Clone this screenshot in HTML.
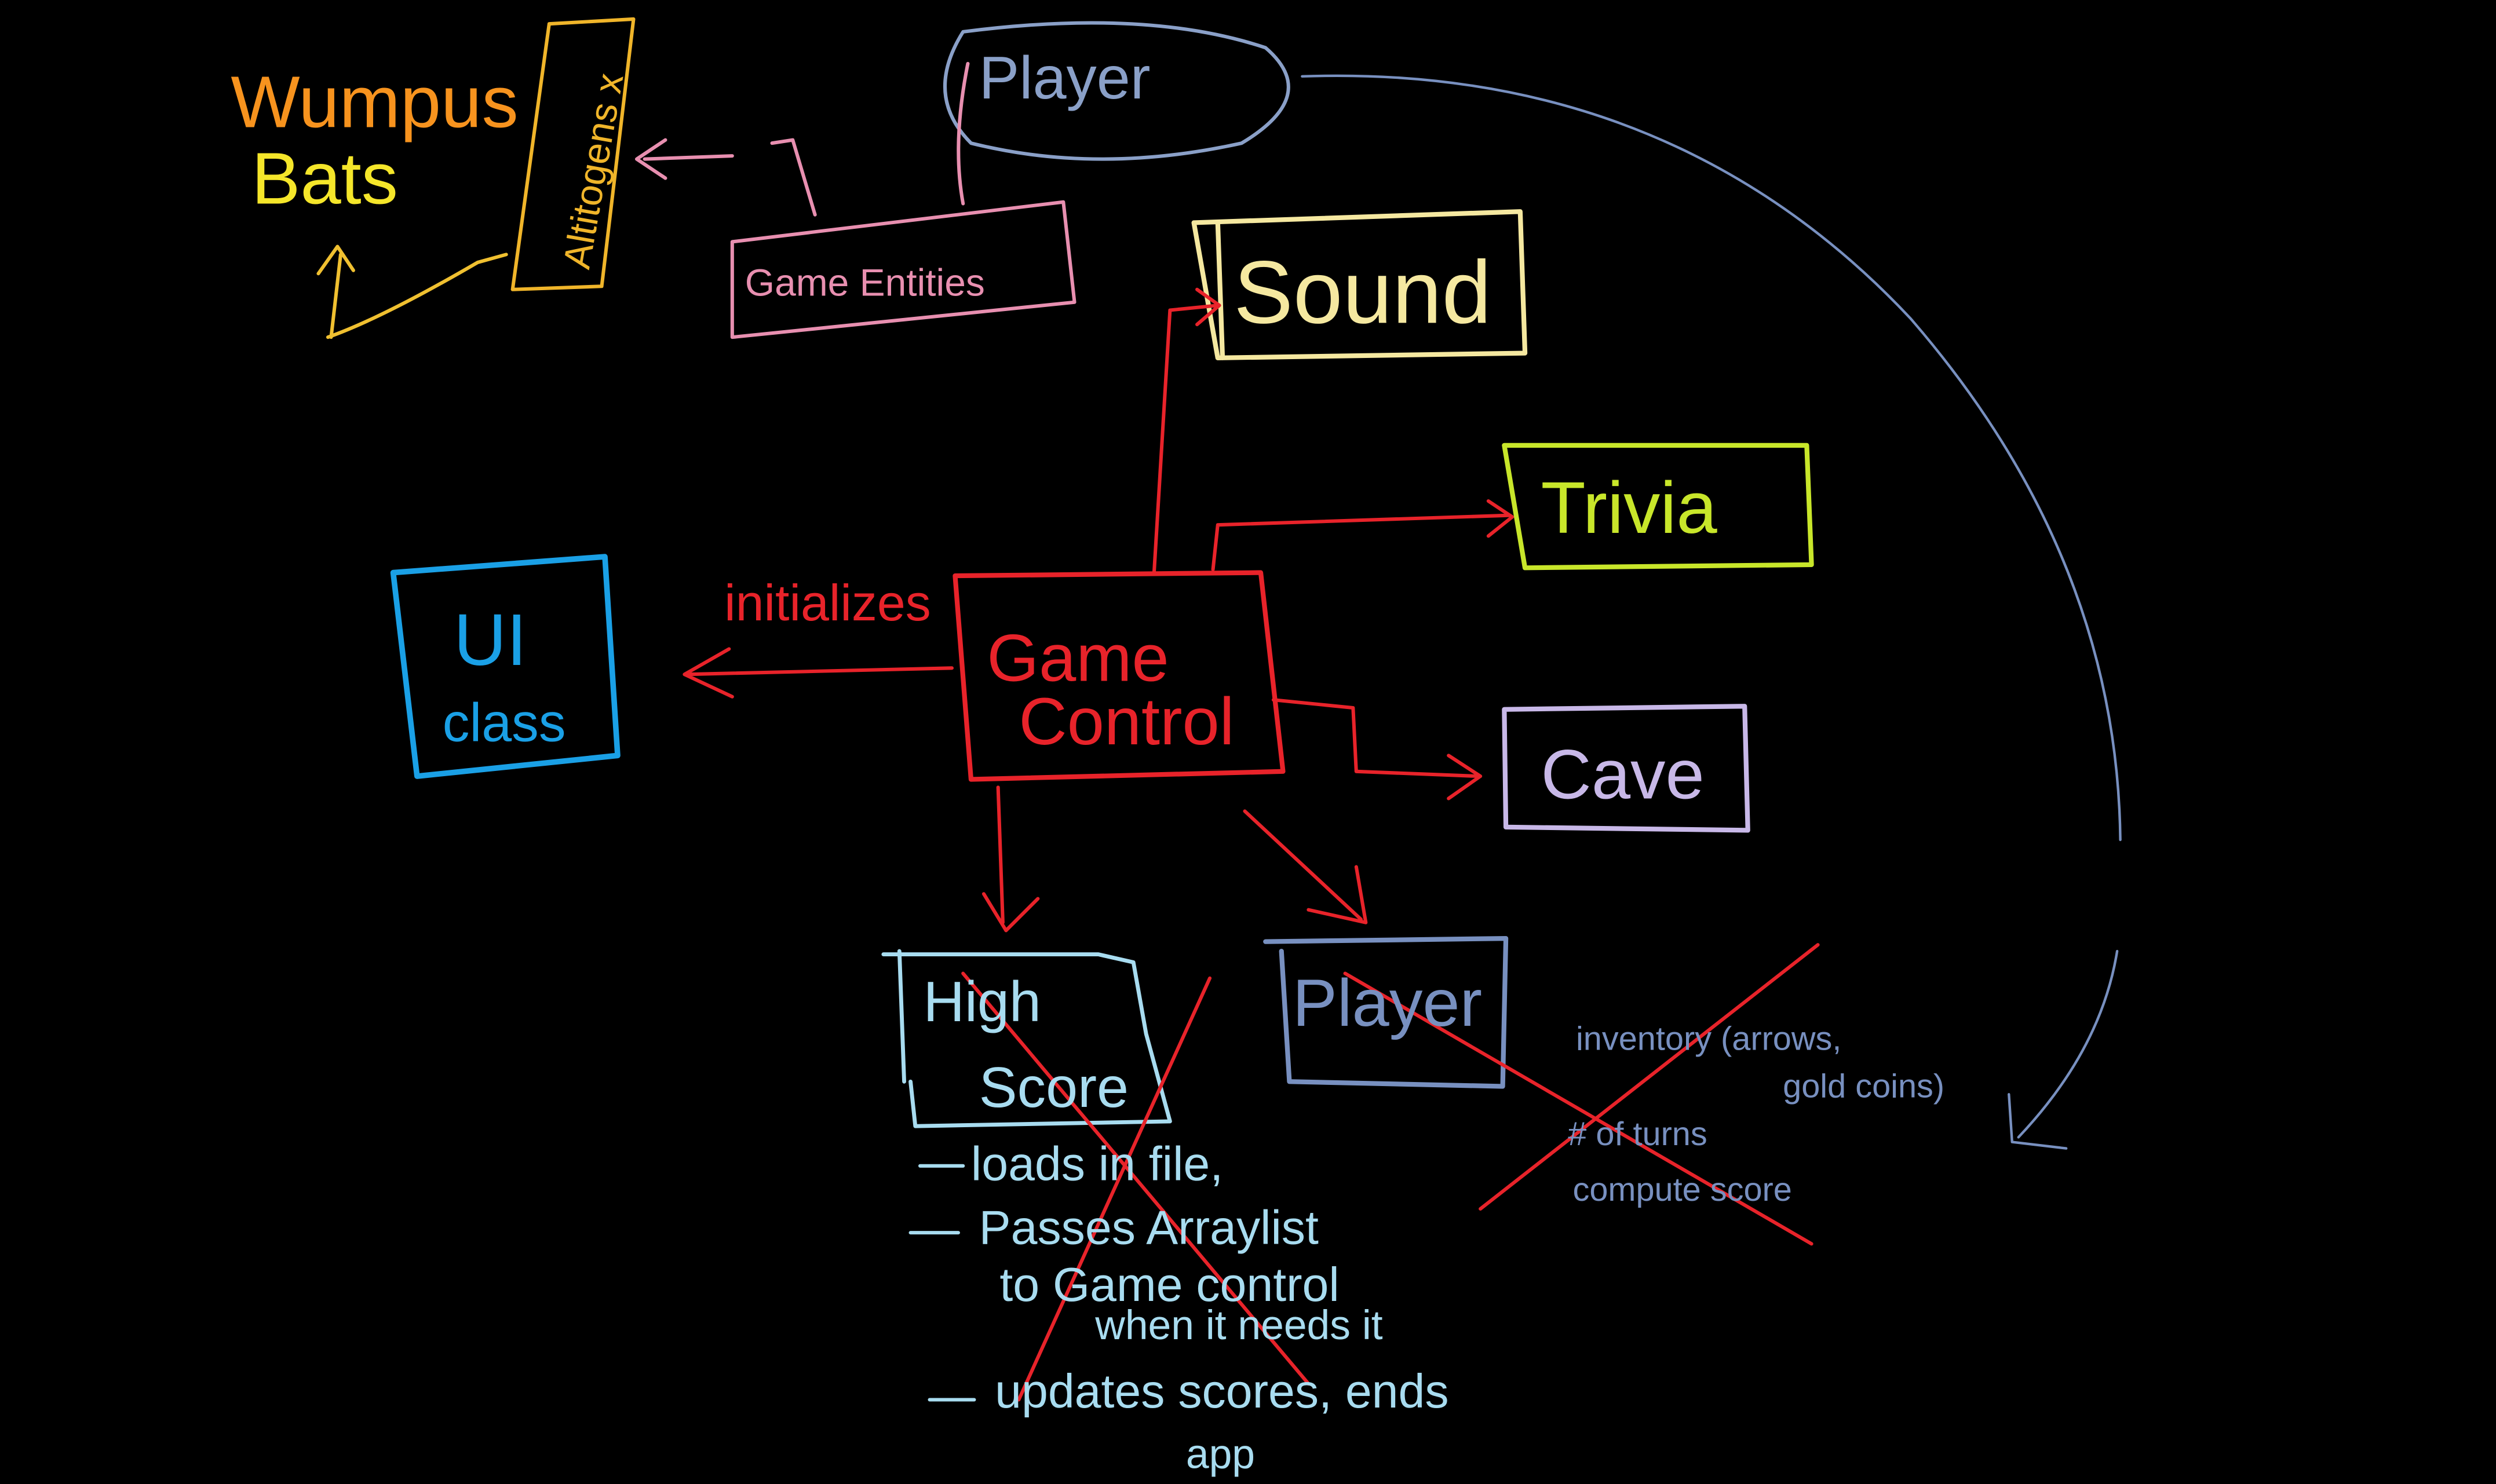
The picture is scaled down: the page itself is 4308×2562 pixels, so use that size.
<!DOCTYPE html>
<html><head><meta charset="utf-8"><style>
html,body{margin:0;padding:0;background:#000;}
svg{display:block}
text{font-family:"Liberation Sans",sans-serif;}
</style></head><body>
<svg width="4308" height="2562" viewBox="0 0 1568 933" preserveAspectRatio="none" xmlns="http://www.w3.org/2000/svg">
<rect width="1568" height="933" fill="#000"/>
<g fill="none" stroke-width="2.2" stroke-linecap="round" stroke-linejoin="round">
<path d="M208 212 L214 160 M200 172 L212 155 L222 170" stroke="#f0c030"/>
<path d="M206 212 Q240 200 300 165 L318 160" stroke="#f0c030"/>
<path d="M345 15 L398 12 L378 180 L322 182 Z" stroke="#f0b52a"/>
<path d="M460 98 L405 100 M418 88 L400 100 L418 112" stroke="#e88fb0"/>
<path d="M485 90 L498 88 L512 135" stroke="#e88fb0"/>
<path d="M460 152 L668 127 L675 190 L460 212 Z" stroke="#e88fb0"/>
<path d="M605 20 Q720 5 795 30 Q830 60 780 90 Q690 110 610 90 Q580 60 605 20" stroke="#8aa0c8"/>
<path d="M608 40 Q598 90 605 128" stroke="#e88fb0"/>
<path d="M818 48 Q1050 40 1200 200 Q1330 350 1332 528" stroke="#7890c0" stroke-width="1.6"/>
<path d="M1330 598 Q1320 660 1268 715 M1262 688 L1264 718 L1298 722" stroke="#7890c0" stroke-width="1.6"/>
<path d="M750 140 L955 133 L958 222 L765 225 Z M765 140 L768 225" stroke="#f5e8a0" stroke-width="3"/>
<path d="M945 280 L1135 280 L1138 355 L958 357 Z" stroke="#c8e62a" stroke-width="3"/>
<path d="M247 360 L380 350 L388 475 L262 488 Z" stroke="#1aa0e6" stroke-width="3.5"/>
<path d="M600 362 L792 360 L806 485 L610 490 Z" stroke="#e8232a" stroke-width="3"/>
<path d="M725 360 L735 195 L765 192 M752 182 L766 192 L752 204" stroke="#e8232a"/>
<path d="M762 358 L765 330 L948 324 M935 315 L950 325 L935 337" stroke="#e8232a"/>
<path d="M598 420 L430 424 M458 408 L430 424 L460 438" stroke="#e8232a"/>
<path d="M800 440 L850 445 L852 485 L928 488 M910 475 L930 488 L910 502" stroke="#e8232a"/>
<path d="M627 495 L630 580 M618 562 L632 585 L652 565" stroke="#e8232a"/>
<path d="M782 510 L855 578 M822 572 L858 580 L852 545" stroke="#e8232a"/>
<path d="M945 446 L1096 444 L1098 522 L946 520 Z" stroke="#c8b8e8" stroke-width="3"/>
<path d="M555 600 L690 600 L712 605 L720 650 L735 705 L575 708 L572 680 M565 598 L568 680" stroke="#a8dcf0" stroke-width="2.5"/>
<path d="M605 612 L822 870 M760 615 L640 880" stroke="#e8232a"/>
<path d="M795 592 L946 590 L944 683 L810 680 L805 598" stroke="#7890c0" stroke-width="3"/>
<path d="M845 612 L1138 782 M930 760 L1142 594" stroke="#e8232a"/>
<path d="M578 733 L605 733 M572 775 L602 775 M584 880 L612 880" stroke="#a8dcf0"/>
</g>
<g>
<text x="145" y="80" font-size="46" fill="#f7931e">Wumpus</text>
<text x="158" y="128" font-size="46" fill="#f5e62a">Bats</text>
<text x="370" y="170" font-size="24" fill="#f0b52a" transform="rotate(-80 370 170)">Altitogens x</text>
<text x="468" y="186" font-size="24" fill="#e88fb0">Game Entities</text>
<text x="615" y="62" font-size="38" fill="#8aa0c8">Player</text>
<text x="775" y="203" font-size="56" fill="#f5e8a0">Sound</text>
<text x="968" y="335" font-size="46" fill="#c8e62a">Trivia</text>
<text x="455" y="390" font-size="32" fill="#e8232a">initializes</text>
<text x="285" y="418" font-size="46" fill="#1aa0e6">UI</text>
<text x="278" y="466" font-size="34" fill="#1aa0e6">class</text>
<text x="620" y="428" font-size="42" fill="#e8232a">Game</text>
<text x="640" y="468" font-size="42" fill="#e8232a">Control</text>
<text x="968" y="502" font-size="44" fill="#c8b8e8">Cave</text>
<text x="580" y="642" font-size="36" fill="#a8dcf0">High</text>
<text x="615" y="696" font-size="36" fill="#a8dcf0">Score</text>
<text x="812" y="645" font-size="42" fill="#7890c0">Player</text>
<text x="990" y="660" font-size="21" fill="#7890c0">inventory (arrows,</text>
<text x="1120" y="690" font-size="21" fill="#7890c0">gold coins)</text>
<text x="985" y="720" font-size="21" fill="#7890c0"># of turns</text>
<text x="988" y="755" font-size="21" fill="#7890c0">compute score</text>
<g fill="#a8dcf0" font-size="30">
<text x="610" y="742">loads in file,</text>
<text x="615" y="782">Passes Arraylist</text>
<text x="628" y="818">to Game control</text>
<text x="688" y="842" font-size="26">when it needs it</text>
<text x="625" y="885">updates scores, ends</text>
<text x="745" y="923" font-size="26">app</text>
</g>
</g>
</svg>
</body></html>
